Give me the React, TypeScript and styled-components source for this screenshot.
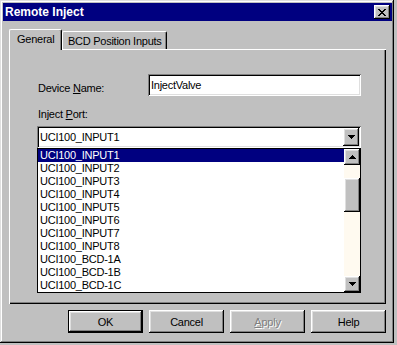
import styled, { createGlobalStyle, css } from 'styled-components'

const ports = [
  'UCI100_INPUT1',
  'UCI100_INPUT2',
  'UCI100_INPUT3',
  'UCI100_INPUT4',
  'UCI100_INPUT5',
  'UCI100_INPUT6',
  'UCI100_INPUT7',
  'UCI100_INPUT8',
  'UCI100_BCD-1A',
  'UCI100_BCD-1B',
  'UCI100_BCD-1C',
]

export default function App() {
  return (
    <>
      <GlobalStyle />
      <Window>
        <TitleBar>
          <Title>Remote Inject</Title>
          <CloseButton aria-label='Close'>
            <svg width={8} height={7} viewBox='0 0 8 7' shapeRendering='crispEdges'>
              <path
                d='M0 0h2v1H0zM6 0h2v1H6zM1 1h2v1H1zM5 1h2v1H5zM2 2h4v1H2zM3 3h2v1H3zM2 4h4v1H2zM1 5h2v1H1zM5 5h2v1H5zM0 6h2v1H0zM6 6h2v1H6z'
                fill='#000'
              />
            </svg>
          </CloseButton>
        </TitleBar>

        <Body>
          <TabStrip>
            <Tab $active>General</Tab>
            <Tab>BCD Position Inputs</Tab>
          </TabStrip>

          <Panel>
            <FieldRow>
              <FieldLabel>
                Device <u>N</u>ame:
              </FieldLabel>
              <TextBox>InjectValve</TextBox>
            </FieldRow>

            <PortLabel>
              Inject <u>P</u>ort:
            </PortLabel>
            <Combo>
              <ComboText>UCI100_INPUT1</ComboText>
              <ArrowButton $w={16} $h={18}>
                <Arrow dir='down' />
              </ArrowButton>
            </Combo>

            <ListBox>
              <Rows>
                {ports.map((p, i) => (
                  <Row key={p} $selected={i === 0}>
                    {p}
                  </Row>
                ))}
              </Rows>
              <ScrollBar>
                <ArrowButton $w={16} $h={16}>
                  <Arrow dir='up' />
                </ArrowButton>
                <Track>
                  <Thumb />
                </Track>
                <ArrowButton $w={16} $h={16}>
                  <Arrow dir='down' />
                </ArrowButton>
              </ScrollBar>
            </ListBox>
          </Panel>

          <ButtonRow>
            <PushButton $default>OK</PushButton>
            <PushButton>Cancel</PushButton>
            <PushButton $disabled>
              <u>A</u>pply
            </PushButton>
            <PushButton>Help</PushButton>
          </ButtonRow>
        </Body>
      </Window>
    </>
  )
}

const Arrow = ({ dir }: { dir: 'up' | 'down' }) => (
  <svg width={7} height={4} viewBox='0 0 7 4' shapeRendering='crispEdges'>
    <path
      d={dir === 'down' ? 'M0 0h7v1H0zM1 1h5v1H1zM2 2h3v1H2zM3 3h1v1H3z' : 'M3 0h1v1H3zM2 1h3v1H2zM1 2h5v1H1zM0 3h7v1H0z'}
      fill='#000'
    />
  </svg>
)

// ======================================================================================

const raised = css`
  background: #c0c0c0;
  box-shadow: inset -1px -1px #000, inset 1px 1px #fff, inset -2px -2px #808080, inset 2px 2px #dfdfdf;
`

const sunken = css`
  box-shadow: inset 1px 1px #808080, inset -1px -1px #fff, inset 2px 2px #000, inset -2px -2px #dfdfdf;
`

const GlobalStyle = createGlobalStyle`
  html, body {
    margin: 0;
    padding: 0;
    background: #c0c0c0;
  }
  body {
    font-family: "Liberation Sans", Arial, sans-serif;
    font-size: 11px;
    letter-spacing: -0.25px;
    color: #000;
  }
  u {
    text-underline-offset: 1px;
  }
`

const Window = styled.div`
  box-sizing: border-box;
  width: 394px;
  height: 343px;
  padding: 3px 2px 3px 3px;
  background: #c0c0c0;
  box-shadow: inset -1px -1px #000, inset 1px 1px #dfdfdf, inset -2px -2px #808080, inset 2px 2px #fff;
  display: flex;
  flex-direction: column;
`

const TitleBar = styled.div`
  height: 18px;
  background: #000080;
  display: flex;
  align-items: center;
  justify-content: space-between;
  padding: 0 2px;
`

const Title = styled.span`
  color: #fff;
  font-weight: bold;
  font-size: 12px;
  letter-spacing: 0;
  line-height: 18px;
`

const CloseButton = styled.div`
  box-sizing: border-box;
  width: 16px;
  height: 14px;
  display: flex;
  align-items: center;
  justify-content: center;
  ${raised}
`

const Body = styled.div`
  padding: 8px 0 0 6px;
`

const TabStrip = styled.div`
  display: flex;
  align-items: flex-end;
  height: 20px;
  position: relative;
  z-index: 1;
`

const Tab = styled.div<{ $active?: boolean }>`
  box-sizing: border-box;
  display: flex;
  align-items: center;
  background: #c0c0c0;
  border-top: 1px solid #fff;
  border-left: 1px solid #fff;
  border-right: 1px solid #000;
  border-radius: 2px 2px 0 0;
  box-shadow: inset -1px 0 #808080;
  white-space: nowrap;
  height: ${(p) => (p.$active ? '21px' : '18px')};
  margin-bottom: ${(p) => (p.$active ? '-1px' : '0')};
  padding: ${(p) => (p.$active ? '0 7px 3px' : '0 4.5px')};
`

const Panel = styled.div`
  box-sizing: border-box;
  width: 377px;
  height: 255px;
  padding: 25px 0 0 28px;
  background: #c0c0c0;
  box-shadow: inset 1px 1px #fff, inset -1px -1px #000, inset -2px -2px #808080;
`

const FieldRow = styled.div`
  display: flex;
  align-items: flex-start;
`

const FieldLabel = styled.div`
  box-sizing: border-box;
  width: 111px;
  padding: 8px 0 0 1px;
  line-height: 12px;
`

const TextBox = styled.div`
  box-sizing: border-box;
  width: 213px;
  height: 22px;
  padding-left: 3px;
  display: flex;
  align-items: center;
  background: #fff;
  ${sunken}
`

const PortLabel = styled.div`
  margin-top: 12px;
  height: 12px;
  line-height: 12px;
  padding-left: 1px;
`

const Combo = styled.div`
  box-sizing: border-box;
  margin-top: 6px;
  width: 324px;
  height: 22px;
  padding: 2px;
  display: flex;
  align-items: center;
  justify-content: space-between;
  background: #fff;
  ${sunken}
`

const ComboText = styled.span`
  padding-left: 1px;
`

const ArrowButton = styled.div<{ $w: number; $h: number }>`
  box-sizing: border-box;
  flex: none;
  width: ${(p) => p.$w}px;
  height: ${(p) => p.$h}px;
  display: flex;
  align-items: center;
  justify-content: center;
  padding-bottom: 1px;
  ${raised}
`

const ListBox = styled.div`
  box-sizing: border-box;
  width: 324px;
  height: 145px;
  border: 1px solid #000;
  background: #fff;
  display: flex;
`

const Rows = styled.div`
  flex: 1;
  min-width: 0;
  display: flex;
  flex-direction: column;
`

const Row = styled.div<{ $selected?: boolean }>`
  height: 13px;
  line-height: 13px;
  padding-left: 2px;
  white-space: nowrap;
  background: ${(p) => (p.$selected ? '#000080' : 'transparent')};
  color: ${(p) => (p.$selected ? '#fff' : '#000')};
`

const ScrollBar = styled.div`
  width: 16px;
  display: flex;
  flex-direction: column;
  background: #fffaf0;
`

const Track = styled.div`
  flex: 1;
`

const Thumb = styled.div`
  margin-top: 13px;
  height: 34px;
  ${raised}
`

const ButtonRow = styled.div`
  width: 377px;
  margin-top: 6px;
  display: flex;
  justify-content: flex-end;
  gap: 6px;
`

const PushButton = styled.div<{ $default?: boolean; $disabled?: boolean }>`
  box-sizing: border-box;
  width: 75px;
  height: 23px;
  display: flex;
  align-items: center;
  justify-content: center;
  ${raised}
  ${(p) =>
    p.$default &&
    css`
      box-shadow: inset 1px 1px #000, inset -1px -1px #000, inset -2px -2px #000, inset 2px 2px #fff,
        inset -3px -3px #808080, inset 3px 3px #dfdfdf;
    `}
  ${(p) =>
    p.$disabled &&
    css`
      color: #808080;
      text-shadow: 1px 1px #fff;
    `}
`
